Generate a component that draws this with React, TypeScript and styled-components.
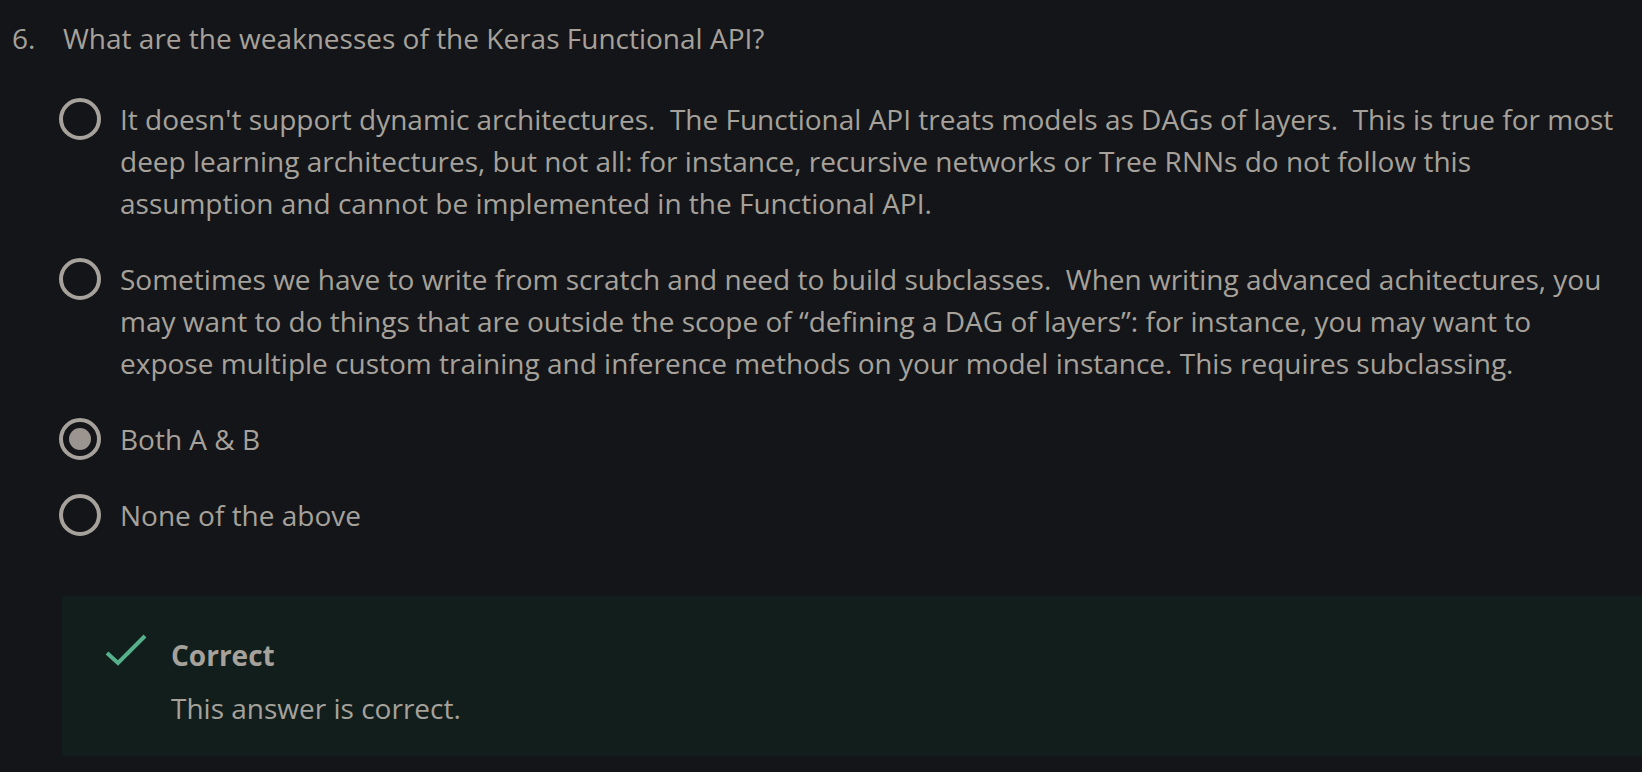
import React from "react";
import styled, { createGlobalStyle } from "styled-components";

const Global = createGlobalStyle`
  html, body {
    margin: 0;
    padding: 0;
    background: #141518;
    overflow: hidden;
  }
  body {
    font-family: "Open Sans", "Noto Sans", sans-serif;
    color: #a6a29b;
  }
`;

const Page = styled.div`
  width: 1642px;
  height: 772px;
  overflow: hidden;
  padding: 17px 20px 0 0;
  box-sizing: border-box;
`;

const QuestionRow = styled.div`
  display: flex;
  font-size: 28px;
  line-height: 42px;
`;

const Number = styled.span`
  width: 51px;
  padding-left: 12px;
  box-sizing: content-box;
  flex: none;
`;

const QuestionText = styled.span``;

const Options = styled.div`
  display: flex;
  flex-direction: column;
  gap: 34px;
  margin: 39px 0 0 59px;
`;

const Option = styled.label`
  display: flex;
  align-items: flex-start;
  gap: 19px;
  font-size: 28px;
  line-height: 42px;
`;

const Radio = styled.span<{ $checked?: boolean }>`
  flex: none;
  width: 42px;
  height: 42px;
  box-sizing: border-box;
  border: 4px solid #a6a29b;
  border-radius: 50%;
  display: flex;
  align-items: center;
  justify-content: center;
  &::after {
    content: "";
    display: ${(p) => (p.$checked ? "block" : "none")};
    width: 22px;
    height: 22px;
    border-radius: 50%;
    background: #9a958e;
  }
`;

const OptionText = styled.span``;

const Feedback = styled.div`
  margin: 60px -20px 0 62px;
  background: #111e1b;
  height: 160px;
  box-sizing: border-box;
  padding: 38px 0 0 43px;
  display: flex;
  gap: 24px;
`;

const Check = styled.svg`
  flex: none;
  width: 42px;
  height: 42px;
  margin-top: -5px;
`;

const FeedbackBody = styled.div`
  display: flex;
  flex-direction: column;
  font-size: 28px;
  line-height: 42px;
`;

const FeedbackTitle = styled.div`
  font-weight: 700;
`;

const FeedbackText = styled.div`
  margin-top: 11px;
`;

const options = [
  {
    text:
      "It doesn't support dynamic architectures.\u00a0 The Functional API treats models as DAGs of layers.\u00a0 This is true for most deep learning architectures, but not all: for instance, recursive networks or Tree RNNs do not follow this assumption and cannot be implemented in the Functional API.",
  },
  {
    text:
      "Sometimes we have to write from scratch and need to build subclasses.\u00a0 When writing advanced achitectures, you may want to do things that are outside the scope of \u201cdefining a DAG of layers\u201d: for instance, you may want to expose multiple custom training and inference methods on your model instance. This requires subclassing.",
  },
  { text: "Both A & B", checked: true },
  { text: "None of the above" },
];

export default function App() {
  return (
    <Page>
      <Global />
      <QuestionRow>
        <Number>6.</Number>
        <QuestionText>What are the weaknesses of the Keras Functional API?</QuestionText>
      </QuestionRow>
      <Options>
        {options.map((o, i) => (
          <Option key={i}>
            <Radio $checked={o.checked} />
            <OptionText>{o.text}</OptionText>
          </Option>
        ))}
      </Options>
      <Feedback>
        <Check viewBox="0 0 42 42">
          <path d="M2 24 L13 34 L40 7" fill="none" stroke="#56b08c" strokeWidth="4" />
        </Check>
        <FeedbackBody>
          <FeedbackTitle>Correct</FeedbackTitle>
          <FeedbackText>This answer is correct.</FeedbackText>
        </FeedbackBody>
      </Feedback>
    </Page>
  );
}
